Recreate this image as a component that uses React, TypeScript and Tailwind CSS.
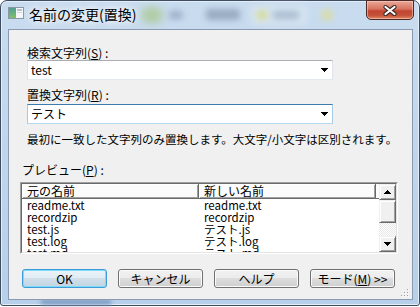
import React from "react";

const U = ({ c }: { c: string }) => (
  <span className="underline decoration-1 underline-offset-[1px]">{c}</span>
);

function Tri({ up = false }: { up?: boolean }) {
  return (
    <svg width="7" height="4" viewBox="0 0 7 4" shapeRendering="crispEdges" className={up ? "rotate-180" : ""}>
      <rect x="0" y="0" width="7" height="1" fill="#000" />
      <rect x="1" y="1" width="5" height="1" fill="#000" />
      <rect x="2" y="2" width="3" height="1" fill="#000" />
      <rect x="3" y="3" width="1" height="1" fill="#000" />
    </svg>
  );
}

function Combo({ value, focused = false }: { value: string; focused?: boolean }) {
  return (
    <div
      className={
        "ml-[18px] w-[306px] h-[20px] bg-white border flex items-center pl-[3px] pr-[4px] " +
        (focused
          ? "border-t-[#3d7bad] border-l-[#a4c9e3] border-r-[#a4c9e3] border-b-[#b7d9ed]"
          : "border-t-[#abadb3] border-l-[#e2e3ea] border-r-[#e2e3ea] border-b-[#e3e9ef]")
      }
    >
      <span className="flex-1 leading-[16px]">{value}</span>
      <Tri />
    </div>
  );
}

function Btn({ children, def = false }: { children: React.ReactNode; def?: boolean }) {
  return (
    <div
      className={
        "w-[85px] h-[19px] rounded-[3px] border flex items-center justify-center leading-[15px] " +
        (def
          ? "border-[#3c9ad6] shadow-[inset_0_0_0_1px_#7fdcf8] bg-[linear-gradient(to_bottom,#eaf3f9_0%,#e0ebf3_50%,#d0dfea_50%,#c3d5e2_100%)]"
          : "border-[#707070] shadow-[inset_0_0_0_1px_#fbfbfb] bg-[linear-gradient(to_bottom,#f2f2f2_0%,#ebebeb_50%,#dddddd_50%,#cfcfcf_100%)]")
      }
    >
      {children}
    </div>
  );
}

const outset =
  "bg-[#f0f0f0] border border-t-[#f0f0f0] border-l-[#f0f0f0] border-r-[#696969] border-b-[#696969] shadow-[inset_1px_1px_0_#ffffff,inset_-1px_-1px_0_#a0a0a0]";

const rows = [
  ["readme.txt", "readme.txt"],
  ["recordzip", "recordzip"],
  ["test.js", "テスト.js"],
  ["test.log", "テスト.log"],
  ["test.md", "テスト.md"],
];

export default function App() {
  return (
    <div className="w-[420px] h-[307px] bg-white overflow-hidden font-['Noto_Sans_CJK_JP','Noto_Sans',sans-serif] text-[12px] text-black">
      <div className="relative w-[420px] h-[306px] rounded-t-[7px] rounded-b-[3px] border border-[#3e4d60] bg-[linear-gradient(to_bottom,#c9dcef_0%,#c2d7ed_40%,#b7cfe8_100%)] flex flex-col pl-[7px] pr-[6px] pb-[5px] shadow-[inset_0_0_0_1px_#e4eef8]">
        {/* blurred background shapes in glass */}
        <div className="absolute left-[140px] top-[6px] w-[22px] h-[16px] rounded-full bg-[#a9c98f] blur-[4px] opacity-80" />
        <div className="absolute left-[168px] top-[10px] w-[14px] h-[8px] rounded-full bg-[#98aec6] blur-[3px]" />
        <div className="absolute left-[205px] top-[8px] w-[34px] h-[11px] rounded-[3px] bg-[#8c9fb4] blur-[3px] opacity-80" />
        <div className="absolute left-[250px] top-[4px] w-[56px] h-[20px] rounded-[3px] bg-[#d6e4f1] blur-[3px]" />
        <div className="absolute left-[255px] top-[9px] w-[12px] h-[10px] rounded-full bg-[#d6dc9c] blur-[3px]" />
        <div className="absolute left-[272px] top-[10px] w-[26px] h-[8px] bg-[#9eb2c8] blur-[3px] opacity-80" />
        <div className="absolute left-[320px] top-[8px] w-[12px] h-[12px] rounded-full bg-[#d9dca8] blur-[3px]" />
        <div className="absolute left-[40px] bottom-[0px] w-[70px] h-[6px] bg-[#7f9ec4] blur-[2px]" />

        {/* title bar */}
        <div className="relative h-[28px] flex items-start shrink-0">
          <svg width="16" height="12" viewBox="0 0 16 12" className="mt-[6px]" shapeRendering="crispEdges">
            <rect x="0" y="0" width="16" height="12" fill="#8a97a6" />
            <rect x="1" y="1" width="14" height="10" fill="#f4f6f8" />
            <defs>
              <linearGradient id="ig" x1="0" y1="0" x2="0" y2="1">
                <stop offset="0" stopColor="#4f9f93" />
                <stop offset="1" stopColor="#7fbf6b" />
              </linearGradient>
            </defs>
            <rect x="1" y="1" width="7" height="10" fill="url(#ig)" />
            <rect x="9" y="2" width="5" height="2" fill="#b9c2cc" />
            <rect x="9" y="5" width="5" height="1" fill="#d4d9df" />
          </svg>
          <span className="ml-[5px] mt-[4px] text-[14px] leading-[18px] [text-shadow:0_0_6px_#fff,0_0_10px_#fff]">
            名前の変更(置換)
          </span>
          <div className="ml-auto -mr-px -mt-px w-[48px] h-[20px] rounded-b-[5px] border border-[#4a2a26] bg-[linear-gradient(to_bottom,#e9a898_0%,#d8735f_45%,#c24430_55%,#c5523a_80%,#e08a63_100%)] shadow-[inset_0_0_0_1px_rgba(255,210,200,0.55)] flex items-center justify-center">
            <svg width="14" height="11" viewBox="0 0 14 11">
              <path d="M2.5 2 L11.5 9 M11.5 2 L2.5 9" stroke="#3b2b2b" strokeWidth="4.2" strokeLinecap="round" />
              <path d="M2.5 2 L11.5 9 M11.5 2 L2.5 9" stroke="#ffffff" strokeWidth="2.2" strokeLinecap="round" />
            </svg>
          </div>
        </div>

        {/* client area */}
        <div className="relative flex-1 bg-[#f0f0f0] border border-[#8a9bb1] flex flex-col">
          <div className="ml-[18px] mt-[15px] h-[15px] leading-[15px]">
            検索文字列(<U c="S" />) :
          </div>
          <Combo value="test" />
          <div className="ml-[18px] mt-[7px] h-[15px] leading-[15px]">
            置換文字列(<U c="R" />) :
          </div>
          <div className="mt-[2px]">
            <Combo value="テスト" focused />
          </div>
          <div className="ml-[18px] mt-[8px] h-[15px] leading-[15px] text-[11.5px] whitespace-nowrap">
            最初に一致した文字列のみ置換します。大文字/小文字は区別されます。
          </div>
          <div className="ml-[13px] mt-[15px] h-[15px] leading-[15px]">
            プレビュー(<U c="P" />) :
          </div>

          {/* list view */}
          <div className="ml-[11px] mt-[5px] w-[378px] h-[72px] border border-t-[#a0a0a0] border-l-[#a0a0a0] border-r-white border-b-white">
            <div className="w-full h-full border border-t-[#696969] border-l-[#696969] border-r-[#e3e3e3] border-b-[#e3e3e3] bg-white flex overflow-hidden">
              <div className="w-[357px] flex flex-col overflow-hidden">
                <div className="flex h-[15px] shrink-0 leading-[14px]">
                  <div className="w-[177px] bg-[#fbfbfb] border-r border-b border-r-[#696969] border-b-[#696969] shadow-[inset_1px_1px_0_#fff,inset_-1px_-1px_0_#a0a0a0] pl-[5px]">
                    元の名前
                  </div>
                  <div className="w-[177px] bg-[#fbfbfb] border-r border-b border-r-[#696969] border-b-[#696969] shadow-[inset_1px_1px_0_#fff,inset_-1px_-1px_0_#a0a0a0] pl-[5px]">
                    新しい名前
                  </div>
                  <div className="flex-1 bg-[#fbfbfb] border-b border-b-[#696969]" />
                </div>
                {rows.map(([a, b]) => (
                  <div key={a} className="flex h-[12px] shrink-0 leading-[12px] text-[11.5px] whitespace-nowrap">
                    <div className="w-[177px] pl-[5px]">{a}</div>
                    <div className="w-[177px] pl-[5px]">{b}</div>
                  </div>
                ))}
              </div>
              {/* scrollbar */}
              <div className="w-[17px] flex flex-col">
                <div className={"h-[16px] flex items-center justify-center " + outset}>
                  <Tri up />
                </div>
                <div className={"h-[23px] " + outset} />
                <div className="flex-1 bg-[repeating-conic-gradient(#ffffff_0_25%,#e6e6e6_0_50%)] bg-[length:2px_2px]" />
                <div className={"h-[16px] flex items-center justify-center " + outset}>
                  <Tri />
                </div>
              </div>
            </div>
          </div>

          {/* buttons */}
          <div className="ml-[13px] mt-[15px] flex gap-[11px]">
            <Btn def>OK</Btn>
            <Btn>キャンセル</Btn>
            <Btn>ヘルプ</Btn>
            <Btn>
              <span>
                モード(<U c="M" />) &gt;&gt;
              </span>
            </Btn>
          </div>

          {/* size grip */}
          <svg width="10" height="10" viewBox="0 0 10 10" className="absolute right-[2px] bottom-[1px]" shapeRendering="crispEdges">
            {[
              [7, 1],
              [4, 4],
              [7, 4],
              [1, 7],
              [4, 7],
              [7, 7],
            ].map(([x, y]) => (
              <g key={`${x}-${y}`}>
                <rect x={x + 1} y={y + 1} width="1" height="1" fill="#ffffff" />
                <rect x={x} y={y} width="1" height="1" fill="#a0a0a0" />
              </g>
            ))}
          </svg>
        </div>
      </div>
    </div>
  );
}
